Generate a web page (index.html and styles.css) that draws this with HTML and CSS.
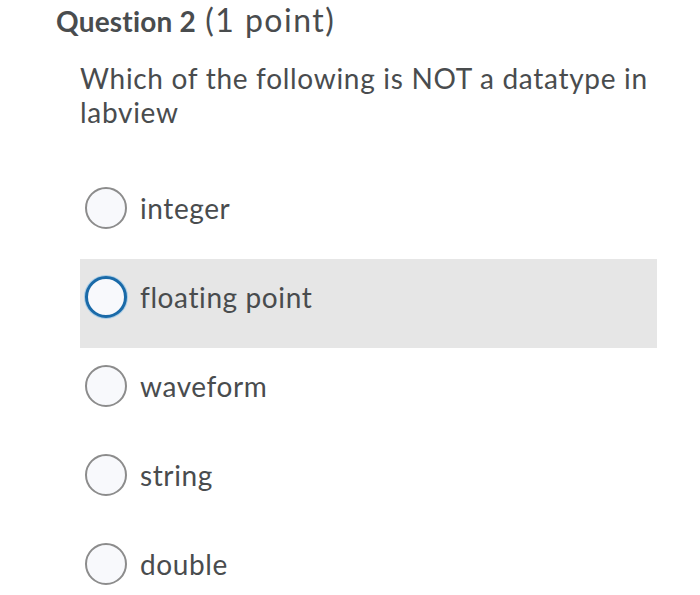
FILE: index.html
```html
<!DOCTYPE html>
<html>
<head>
<meta charset="utf-8">
<link rel="stylesheet" href="styles.css">
</head>
<body>
<div class="page">
  <h2 class="title"><span class="title-strong">Question 2</span> <span class="title-points">(1 point)</span></h2>
  <div class="question">
    <p class="prompt">Which of the following is NOT a datatype in labview</p>
    <ul class="options">
      <li class="option"><span class="radio"></span><span class="label">integer</span></li>
      <li class="option option-focus"><span class="radio radio-focus"></span><span class="label">floating point</span></li>
      <li class="option"><span class="radio"></span><span class="label">waveform</span></li>
      <li class="option"><span class="radio"></span><span class="label">string</span></li>
      <li class="option"><span class="radio"></span><span class="label">double</span></li>
    </ul>
  </div>
</div>
</body>
</html>
```

FILE: styles.css
```css
html, body {
  margin: 0;
  padding: 0;
  background: #ffffff;
}
body {
  font-family: Lato, "Open Sans", sans-serif;
  color: #494c4e;
}
.page {
  width: 700px;
  height: 595px;
  overflow: hidden;
}
.title {
  margin: 0;
  padding: 2px 0 0 56px;
  font-size: 28px;
  line-height: 36px;
  height: 36px;
  font-weight: 400;
  white-space: nowrap;
}
.title-strong {
  font-weight: 700;
  letter-spacing: 0.2px;
}
.title-points {
  font-size: 32px;
  letter-spacing: 1.5px;
  line-height: 36px;
  margin-left: 2px;
}
.question {
  padding: 0 43px 0 80px;
}
.prompt {
  margin: 0;
  padding-top: 23px;
  font-size: 28px;
  line-height: 34px;
  letter-spacing: 0.7px;
  width: 590px;
}
.options {
  list-style: none;
  margin: 0;
  padding: 41px 0 0 0;
  width: 577px;
}
.option {
  display: flex;
  align-items: center;
  gap: 13px;
  height: 89px;
  box-sizing: border-box;
  padding: 17px 0 30px 5px;
}
.option-focus {
  background: #e6e6e6;
}
.radio {
  width: 42px;
  height: 42px;
  box-sizing: border-box;
  border-radius: 50%;
  border: 2px solid #8c8c8c;
  background: #f8f9fc;
  flex: none;
}
.radio-focus {
  border: 3.5px solid #1a6aa8;
  box-shadow: 0 0 0 1px rgba(110, 180, 230, 0.5);
}
.label {
  font-size: 28px;
  line-height: 42px;
  letter-spacing: 0.6px;
}
```
